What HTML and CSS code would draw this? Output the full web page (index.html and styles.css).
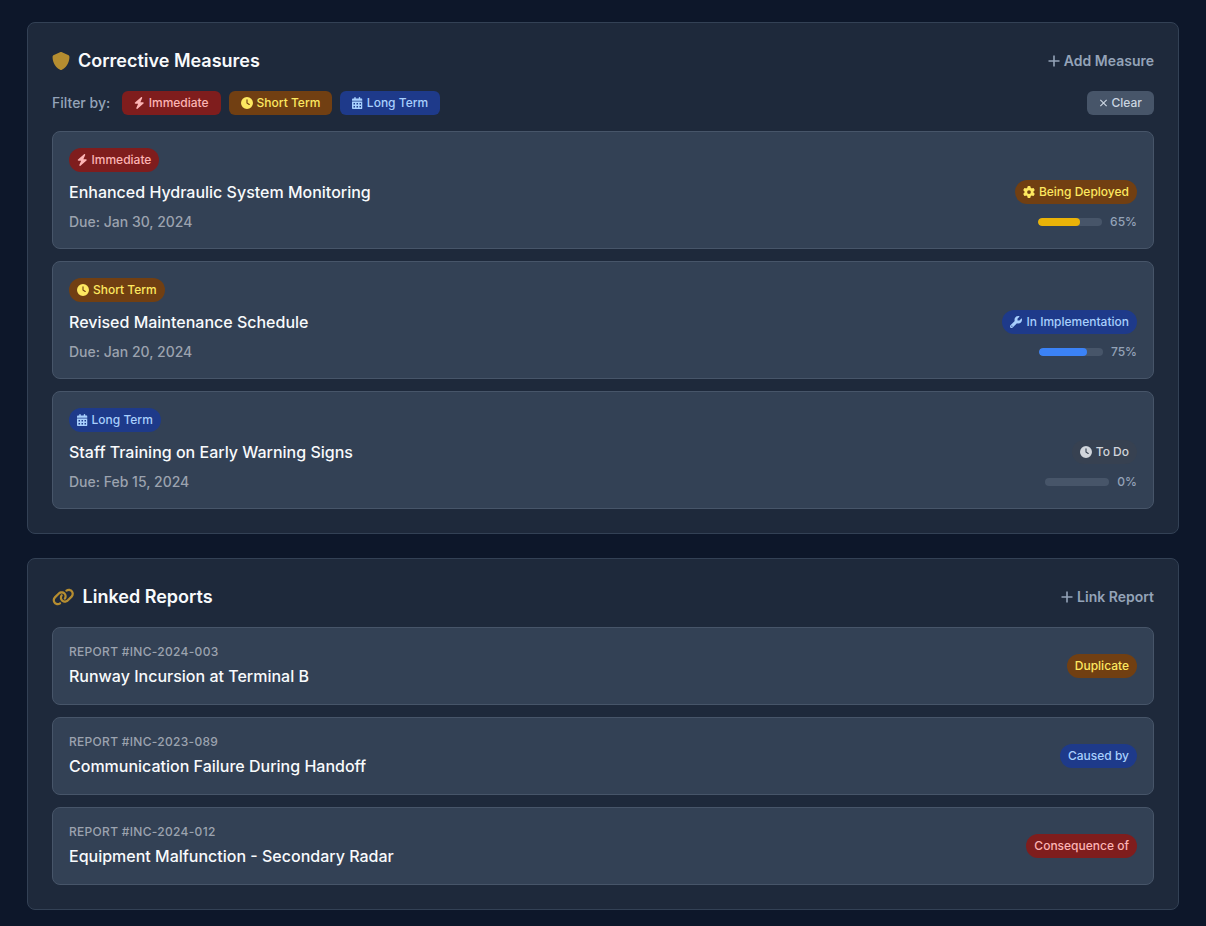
FILE: index.html
```html
<!DOCTYPE html>
<html lang="en">
<head>
    <meta charset="UTF-8">
    <meta name="viewport" content="width=device-width, initial-scale=1.0">
    <title>Incident Report</title>
    <link rel="stylesheet" href="styles.css">
</head>
<body>
    <svg class="icon-defs" aria-hidden="true">
        <symbol id="i-bolt" viewBox="0 0 448 512"><path d="M349.4 44.6c5.9-13.7 1.5-29.7-10.6-38.5s-28.6-8-39.9 1.8l-256 224c-10 8.8-13.6 22.9-8.9 35.3S50.7 288 64 288H175.5L98.6 467.4c-5.9 13.7-1.5 29.7 10.6 38.5s28.6 8 39.9-1.8l256-224c10-8.8 13.6-22.9 8.9-35.3s-16.6-20.7-30-20.7H272.5L349.4 44.6z"/></symbol>
        <symbol id="i-clock" viewBox="0 0 512 512"><path d="M256 0a256 256 0 1 1 0 512A256 256 0 1 1 256 0zM232 120V256c0 8 4 15.5 10.7 20l96 64c11 7.4 25.9 4.4 33.3-6.7s4.4-25.9-6.7-33.3L280 243.2V120c0-13.3-10.7-24-24-24s-24 10.7-24 24z"/></symbol>
        <symbol id="i-calendar" viewBox="0 0 448 512"><path d="M128 0c17.7 0 32 14.3 32 32V64H288V32c0-17.7 14.3-32 32-32s32 14.3 32 32V64h48c26.5 0 48 21.5 48 48v48H0V112C0 85.5 21.5 64 48 64H96V32c0-17.7 14.3-32 32-32zM0 192H448V464c0 26.5-21.5 48-48 48H48c-26.5 0-48-21.5-48-48V192zm64 80v32c0 8.8 7.2 16 16 16h32c8.8 0 16-7.2 16-16V272c0-8.8-7.2-16-16-16H80c-8.8 0-16 7.2-16 16zm128 0v32c0 8.8 7.2 16 16 16h32c8.8 0 16-7.2 16-16V272c0-8.8-7.2-16-16-16H208c-8.8 0-16 7.2-16 16zm144-16c-8.8 0-16 7.2-16 16v32c0 8.8 7.2 16 16 16h32c8.8 0 16-7.2 16-16V272c0-8.8-7.2-16-16-16H336zM64 400v32c0 8.8 7.2 16 16 16h32c8.8 0 16-7.2 16-16V400c0-8.8-7.2-16-16-16H80c-8.8 0-16 7.2-16 16zm144-16c-8.8 0-16 7.2-16 16v32c0 8.8 7.2 16 16 16h32c8.8 0 16-7.2 16-16V400c0-8.8-7.2-16-16-16H208zm112 16v32c0 8.8 7.2 16 16 16h32c8.8 0 16-7.2 16-16V400c0-8.8-7.2-16-16-16H336c-8.8 0-16 7.2-16 16z"/></symbol>
        <symbol id="i-gear" viewBox="0 0 512 512"><path d="M495.9 166.6c3.2 8.7 .5 18.4-6.4 24.6l-43.3 39.4c1.1 8.3 1.7 16.8 1.7 25.4s-.6 17.1-1.7 25.4l43.3 39.4c6.9 6.2 9.6 15.9 6.4 24.6c-4.4 11.9-9.7 23.3-15.8 34.3l-4.7 8.1c-6.6 11-14 21.4-22.1 31.2c-5.9 7.2-15.7 9.6-24.5 6.8l-55.7-17.7c-13.4 10.3-28.2 18.9-44 25.4l-12.5 57.1c-2 9.1-9 16.3-18.2 17.8c-13.8 2.3-28 3.5-42.5 3.5s-28.7-1.2-42.5-3.5c-9.2-1.5-16.2-8.7-18.2-17.8l-12.5-57.1c-15.8-6.5-30.6-15.1-44-25.4L83.1 425.9c-8.8 2.8-18.6 .3-24.5-6.8c-8.1-9.8-15.5-20.2-22.1-31.2l-4.7-8.1c-6.1-11-11.4-22.4-15.8-34.3c-3.2-8.7-.5-18.4 6.4-24.6l43.3-39.4C64.6 273.1 64 264.6 64 256s.6-17.1 1.7-25.4L22.4 191.2c-6.9-6.2-9.6-15.9-6.4-24.6c4.4-11.9 9.7-23.3 15.8-34.3l4.7-8.1c6.6-11 14-21.4 22.1-31.2c5.9-7.2 15.7-9.6 24.5-6.8l55.7 17.7c13.4-10.3 28.2-18.9 44-25.4l12.5-57.1c2-9.1 9-16.3 18.2-17.8C227.3 1.2 241.5 0 256 0s28.7 1.2 42.5 3.5c9.2 1.5 16.2 8.7 18.2 17.8l12.5 57.1c15.8 6.5 30.6 15.1 44 25.4l55.7-17.7c8.8-2.8 18.6-.3 24.5 6.8c8.1 9.8 15.5 20.2 22.1 31.2l4.7 8.1c6.1 11 11.4 22.4 15.8 34.3zM256 336a80 80 0 1 0 0-160 80 80 0 1 0 0 160z"/></symbol>
        <symbol id="i-wrench" viewBox="0 0 512 512"><path d="M352 320c88.4 0 160-71.6 160-160c0-15.3-2.2-30.1-6.2-44.2c-3.1-10.8-16.4-13.2-24.3-5.3l-76.8 76.8c-3 3-7.1 4.7-11.3 4.7H336c-8.8 0-16-7.2-16-16V118.6c0-4.2 1.7-8.3 4.7-11.3l76.8-76.8c7.9-7.9 5.4-21.2-5.3-24.3C382.1 2.2 367.3 0 352 0C263.6 0 192 71.6 192 160c0 19.1 3.4 37.5 9.5 54.5L19.9 396.1C7.2 408.8 0 426.1 0 444.1C0 481.6 30.4 512 67.9 512c18 0 35.3-7.2 48-19.9L297.5 310.5c17 6.2 35.4 9.5 54.5 9.5zM80 408a24 24 0 1 1 0 48 24 24 0 1 1 0-48z"/></symbol>
        <symbol id="i-shield" viewBox="0 0 512 512"><path d="M256 0c4.6 0 9.2 1 13.4 2.9L457.7 82.8c22 9.3 38.4 31 38.3 57.2c-.5 99.2-41.3 280.7-213.6 363.2c-16.7 8-36.1 8-52.8 0C57.3 420.7 16.5 239.2 16 140c-.1-26.2 16.3-47.9 38.3-57.2L242.7 2.9C246.8 1 251.4 0 256 0z"/></symbol>
        <symbol id="i-link" viewBox="0 0 640 512"><path d="M579.8 267.7c56.5-56.5 56.5-148 0-204.5c-50-50-128.8-56.5-186.3-15.4l-1.6 1.1c-14.4 10.3-17.7 30.3-7.4 44.6s30.3 17.7 44.6 7.4l1.6-1.1c32.1-22.9 76-19.3 103.8 8.6c31.5 31.5 31.5 82.5 0 114L422.3 334.8c-31.5 31.5-82.5 31.5-114 0c-27.9-27.9-31.5-71.8-8.6-103.8l1.1-1.6c10.3-14.4 6.9-34.4-7.4-44.6s-34.4-6.9-44.6 7.4l-1.1 1.6C206.5 251.2 213 330 263 380c56.5 56.5 148 56.5 204.5 0L579.8 267.7zM60.2 244.3c-56.5 56.5-56.5 148 0 204.5c50 50 128.8 56.5 186.3 15.4l1.6-1.1c14.4-10.3 17.7-30.3 7.4-44.6s-30.3-17.7-44.6-7.4l-1.6 1.1c-32.1 22.9-76 19.3-103.8-8.6C74 372 74 321 105.5 289.5L217.7 177.2c31.5-31.5 82.5-31.5 114 0c27.9 27.9 31.5 71.8 8.6 103.9l-1.1 1.6c-10.3 14.4-6.9 34.4 7.4 44.6s34.4 6.9 44.6-7.4l1.1-1.6C433.5 260.8 427 182 377 132c-56.5-56.5-148-56.5-204.5 0L60.2 244.3z"/></symbol>
    </svg>

    <main class="page">
        <section class="panel">
            <div class="panel-header">
                <h2 class="panel-title">
                    <svg class="title-icon"><use href="#i-shield"/></svg>
                    Corrective Measures
                </h2>
                <a class="panel-action">
                    <svg class="plus-icon" viewBox="0 0 12 12"><path d="M6 .5v11M.5 6h11"/></svg>
                    Add Measure
                </a>
            </div>

            <div class="filter-row">
                <span class="filter-label">Filter by:</span>
                <button class="chip chip-filter red"><svg class="icon-bolt"><use href="#i-bolt"/></svg>Immediate</button>
                <button class="chip chip-filter amber"><svg class="icon-round"><use href="#i-clock"/></svg>Short Term</button>
                <button class="chip chip-filter blue"><svg class="icon-bolt"><use href="#i-calendar"/></svg>Long Term</button>
                <button class="chip chip-filter clear">
                    <svg class="x-icon" viewBox="0 0 10 10"><path d="M1.5 1.5l7 7M8.5 1.5l-7 7"/></svg>Clear
                </button>
            </div>

            <div class="item-list">
                <article class="item measure">
                    <div class="item-main">
                        <span class="chip red"><svg class="icon-bolt"><use href="#i-bolt"/></svg>Immediate</span>
                        <h3 class="item-title spaced">Enhanced Hydraulic System Monitoring</h3>
                        <p class="due">Due: Jan 30, 2024</p>
                    </div>
                    <div class="item-side">
                        <span class="chip amber"><svg class="icon-round"><use href="#i-gear"/></svg>Being Deployed</span>
                        <div class="progress">
                            <div class="track"><div class="fill fill-yellow" style="width: 65%"></div></div>
                            <span class="percent">65%</span>
                        </div>
                    </div>
                </article>

                <article class="item measure">
                    <div class="item-main">
                        <span class="chip amber"><svg class="icon-round"><use href="#i-clock"/></svg>Short Term</span>
                        <h3 class="item-title spaced">Revised Maintenance Schedule</h3>
                        <p class="due">Due: Jan 20, 2024</p>
                    </div>
                    <div class="item-side">
                        <span class="chip blue"><svg class="icon-round"><use href="#i-wrench"/></svg>In Implementation</span>
                        <div class="progress">
                            <div class="track"><div class="fill fill-blue" style="width: 75%"></div></div>
                            <span class="percent">75%</span>
                        </div>
                    </div>
                </article>

                <article class="item measure">
                    <div class="item-main">
                        <span class="chip blue"><svg class="icon-bolt"><use href="#i-calendar"/></svg>Long Term</span>
                        <h3 class="item-title spaced">Staff Training on Early Warning Signs</h3>
                        <p class="due">Due: Feb 15, 2024</p>
                    </div>
                    <div class="item-side">
                        <span class="chip gray"><svg class="icon-round"><use href="#i-clock"/></svg>To Do</span>
                        <div class="progress">
                            <div class="track"><div class="fill" style="width: 0%"></div></div>
                            <span class="percent">0%</span>
                        </div>
                    </div>
                </article>
            </div>
        </section>

        <section class="panel">
            <div class="panel-header">
                <h2 class="panel-title">
                    <svg class="title-icon wide"><use href="#i-link"/></svg>
                    Linked Reports
                </h2>
                <a class="panel-action">
                    <svg class="plus-icon" viewBox="0 0 12 12"><path d="M6 .5v11M.5 6h11"/></svg>
                    Link Report
                </a>
            </div>

            <div class="item-list">
                <article class="item report">
                    <div class="item-main">
                        <p class="report-id">Report #INC-2024-003</p>
                        <h3 class="item-title">Runway Incursion at Terminal B</h3>
                    </div>
                    <span class="chip amber">Duplicate</span>
                </article>
                <article class="item report">
                    <div class="item-main">
                        <p class="report-id">Report #INC-2023-089</p>
                        <h3 class="item-title">Communication Failure During Handoff</h3>
                    </div>
                    <span class="chip blue">Caused by</span>
                </article>
                <article class="item report">
                    <div class="item-main">
                        <p class="report-id">Report #INC-2024-012</p>
                        <h3 class="item-title">Equipment Malfunction - Secondary Radar</h3>
                    </div>
                    <span class="chip red">Consequence of</span>
                </article>
            </div>
        </section>
    </main>
</body>
</html>
```

FILE: styles.css
```css
* {
    box-sizing: border-box;
}

body {
    margin: 0;
    font-family: Inter, "Liberation Sans", sans-serif;
    background-color: #0d172a;
    color: #f8fafc;
}

.icon-defs {
    display: none;
}

.page {
    display: flex;
    flex-direction: column;
    gap: 24px;
    max-width: 1152px;
    margin: 0 auto;
    padding: 22px 0 16px;
}

.panel {
    padding: 24px;
    background-color: #1e293b;
    border: 1px solid #334155;
    border-radius: 8px;
}

.panel-header {
    display: flex;
    justify-content: space-between;
    align-items: center;
    margin-bottom: 16px;
}

.panel-title {
    display: flex;
    align-items: center;
    gap: 8px;
    margin: 0;
    font-size: 18px;
    line-height: 28px;
    font-weight: 600;
}

.title-icon {
    width: 18px;
    height: 18px;
    fill: #b58d30;
}

.title-icon.wide {
    width: 22.5px;
}

.panel-action {
    display: flex;
    align-items: center;
    gap: 4px;
    font-size: 14px;
    line-height: 20px;
    font-weight: 600;
    color: #94a3b8;
}

.plus-icon {
    width: 12px;
    height: 12px;
    fill: none;
    stroke: #94a3b8;
    stroke-width: 1.6;
}

.filter-row {
    display: flex;
    align-items: center;
    gap: 8px;
    margin-bottom: 16px;
}

.filter-label {
    margin-right: 4px;
    font-size: 14px;
    line-height: 20px;
    font-weight: 500;
    color: #94a3b8;
}

.chip {
    display: inline-flex;
    align-items: center;
    gap: 4px;
    padding: 4px 8px;
    font-family: inherit;
    font-size: 12px;
    line-height: 16px;
    font-weight: 500;
    border: 0;
    border-radius: 12px;
    white-space: nowrap;
}

.chip svg {
    height: 12px;
    fill: currentColor;
}

.chip-filter {
    padding: 4px 12px;
    border-radius: 6px;
}

.icon-bolt {
    width: 10.5px;
}

.icon-round {
    width: 12px;
}

.red {
    background-color: #7f1d1d;
    color: #fcb4b4;
}

.amber {
    background-color: #713f12;
    color: #fde860;
}

.blue {
    background-color: #1e3a8a;
    color: #a8cffd;
}

.gray {
    background-color: #374151;
    color: #d1d5db;
}

.clear {
    margin-left: auto;
    background-color: #475569;
    color: #cbd5e1;
}

.x-icon {
    width: 9px;
    height: 9px;
    fill: none !important;
    stroke: #cbd5e1;
    stroke-width: 1.3;
}

.item-list {
    display: flex;
    flex-direction: column;
    gap: 12px;
}

.item {
    display: flex;
    justify-content: space-between;
    padding: 16px;
    background-color: #334155;
    border: 1px solid #475569;
    border-radius: 8px;
}

.measure {
    align-items: flex-end;
}

.report {
    align-items: center;
}

.item-main {
    display: flex;
    flex-direction: column;
    align-items: flex-start;
}

.item-title {
    margin: 0;
    font-size: 16px;
    line-height: 24px;
    font-weight: 500;
}

.item-title.spaced {
    margin: 8px 0;
}

.due {
    margin: 0;
    font-size: 14px;
    line-height: 20px;
    font-weight: 500;
    color: #9ca3af;
}

.report-id {
    margin: 0 0 4px;
    font-size: 12px;
    line-height: 16px;
    font-weight: 500;
    letter-spacing: 0.3px;
    text-transform: uppercase;
    color: #9ca3af;
}

.item-side {
    display: flex;
    flex-direction: column;
    align-items: flex-end;
    gap: 8px;
}

.progress {
    display: flex;
    align-items: center;
    gap: 8px;
    height: 20px;
}

.track {
    width: 64px;
    height: 8px;
    background-color: #475569;
    border-radius: 4px;
    overflow: hidden;
}

.fill {
    height: 100%;
    border-radius: 4px;
}

.fill-yellow {
    background-color: #eab308;
}

.fill-blue {
    background-color: #3b82f6;
}

.percent {
    font-size: 12px;
    line-height: 16px;
    font-weight: 500;
    color: #94a3b8;
}
```
